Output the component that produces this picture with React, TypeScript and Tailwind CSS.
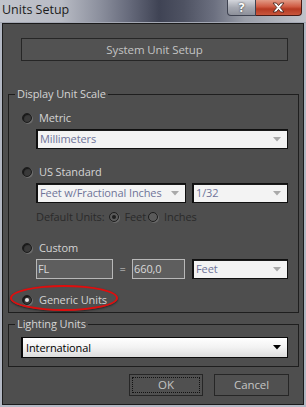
import React from "react";

const FONT = "font-['Open_Sans',sans-serif]";

function Radio({ checked = false, disabled = false }: { checked?: boolean; disabled?: boolean }) {
  return (
    <span
      className={`relative flex items-center justify-center w-[10px] h-[10px] rounded-full shrink-0 border border-[#1c1c1c] ${
        disabled ? "bg-[#5a5a5a] shadow-[1px_1px_0_#6a6a6a]" : "bg-[#3a3a3a] shadow-[inset_1px_1px_1px_#151515,1px_1px_0_#6e6e6e]"
      }`}
    >
      {checked && (
        <span className={`w-[4px] h-[4px] rounded-full ${disabled ? "bg-[#1e1e1e]" : "bg-[#e4e4e4]"}`} />
      )}
    </span>
  );
}

function Arrow({ dark = false }: { dark?: boolean }) {
  return (
    <svg width="8" height="5" viewBox="0 0 8 5" className="shrink-0">
      <path d="M0 0H8L4 4.5Z" fill={dark ? "#000000" : "#a9a9a9"} />
    </svg>
  );
}

function Drop({ cls, text }: { cls: string; text: string }) {
  return (
    <div
      className={`flex items-center h-[20px] pl-[2px] pr-[6px] bg-[#f3f3f3] border border-[#101010] border-l-2 shadow-[inset_0_1px_0_#1a1a1a] ${cls}`}
    >
      <span className="flex-1 text-[#6f7399] whitespace-nowrap leading-[16px]">{text}</span>
      <Arrow />
    </div>
  );
}

function Field({ cls, text }: { cls: string; text: string }) {
  return (
    <div className={`flex items-center h-[20px] pl-[1px] bg-[#5e5e5e] border border-[#b8b8b8] ${cls}`}>
      <span className="text-[#d8d8d8] leading-[16px]">{text}</span>
    </div>
  );
}

export default function App() {
  return (
    <div className={`w-[306px] h-[407px] bg-[#b3b8c4] flex flex-col ${FONT} text-[11px] tracking-[-0.1px] overflow-hidden`}>
      {/* Title bar */}
      <div className="h-[23px] flex items-start pl-[2px] pr-[4px] bg-[linear-gradient(90deg,#c1c4cc_0%,#b8bbc4_20%,#8a8e9c_33%,#676b7c_42%,#3f4354_52%,#4e5262_60%,#6c7080_70%,#9a9ea8_80%,#c0c3ca_100%)] border-b border-[#a4a8b4]">
        <span className="mt-[2px] text-[12.5px] tracking-normal text-[#1c1c1c] leading-[16px]">Units Setup</span>
        <div className="ml-auto flex h-[16px]">
          <div className="w-[29px] h-[16px] flex items-start justify-center rounded-bl-[4px] border border-t-0 border-[#3e4250] bg-[linear-gradient(180deg,#d4d6dc_0%,#a6a9b2_50%,#8d909a_100%)]">
            <span className="text-[12px] font-bold text-white leading-[15px] [text-shadow:0_0_2px_#222]">?</span>
          </div>
          <div className="w-[46px] h-[16px] flex items-center justify-center rounded-br-[4px] border border-l-0 border-t-0 border-[#4a1a14] bg-[linear-gradient(180deg,#e29a86_0%,#cf5a42_45%,#b63a22_60%,#c9563c_100%)]">
            <svg width="13" height="11" viewBox="0 0 13 11">
              <path
                d="M1 1H4.3L6.5 3.6L8.7 1H12L8.2 5.5L12 10H8.7L6.5 7.4L4.3 10H1L4.8 5.5Z"
                fill="#ffffff"
                stroke="#3a1a14"
                strokeWidth="0.8"
              />
            </svg>
          </div>
        </div>
      </div>

      {/* Client area */}
      <div className="ml-[2px] w-[302px] h-[382px] border border-[#1a1a1a] bg-[#4e4e4e] flex flex-col">
        <button className="mt-[14px] ml-[18px] w-[267px] h-[23px] border border-[#262626] bg-[#525252] text-[#c4c4c4] text-[11.5px] leading-none">
          System Unit Setup
        </button>

        {/* Display Unit Scale group */}
        <div className="relative mt-[33px] ml-[5px] w-[291px] h-[219px] border border-[#1e1e1e] flex flex-col">
          <span className="absolute -top-[9px] left-[6px] px-[2px] bg-[#4e4e4e] text-[#d4d4d4] leading-[16px]">
            Display Unit Scale
          </span>

          <div className="mt-[16px] ml-[13px] h-[14px] flex items-center gap-[7px]">
            <Radio />
            <span className="text-[#d4d4d4] leading-[16px]">Metric</span>
          </div>
          <Drop cls="mt-[4px] ml-[27px] w-[252px]" text="Millimeters" />

          <div className="mt-[16px] ml-[13px] h-[14px] flex items-center gap-[7px]">
            <Radio />
            <span className="text-[#d4d4d4] leading-[16px]">US Standard</span>
          </div>
          <div className="mt-[4px] ml-[27px] flex gap-[6px]">
            <Drop cls="w-[150px]" text="Feet w/Fractional Inches" />
            <Drop cls="w-[96px]" text="1/32" />
          </div>

          <div className="mt-[7px] ml-[27px] h-[14px] flex items-center text-[#2a2a2a] leading-[16px]">
            <span>Default Units:</span>
            <span className="ml-[5px]">
              <Radio checked disabled />
            </span>
            <span className="ml-[5px]">Feet</span>
            <span className="ml-[2px]">
              <Radio disabled />
            </span>
            <span className="ml-[6px]">Inches</span>
          </div>

          <div className="mt-[17px] ml-[13px] h-[14px] flex items-center gap-[7px]">
            <Radio />
            <span className="text-[#d4d4d4] leading-[16px]">Custom</span>
          </div>
          <div className="mt-[4px] ml-[27px] flex items-center">
            <Field cls="w-[77px]" text="FL" />
            <span className="w-[19px] text-center text-[#d0d0d0] leading-[16px]">=</span>
            <Field cls="w-[53px]" text="660,0" />
            <Drop cls="ml-[7px] w-[96px]" text="Feet" />
          </div>

          <div className="mt-[14px] ml-[13px] h-[14px] flex items-center gap-[7px]">
            <Radio checked />
            <span className="text-[#d4d4d4] leading-[16px]">Generic Units</span>
          </div>

          <div className="absolute left-[1px] top-[190px] w-[108px] h-[26px] rounded-[50%] border-2 border-[#e00d0d] shadow-[0_1px_2px_rgba(0,0,0,0.5)]" />
        </div>

        {/* Lighting Units group */}
        <div className="relative mt-[11px] ml-[5px] w-[291px] h-[43px] border border-[#1e1e1e] flex flex-col">
          <span className="absolute -top-[9px] left-[6px] px-[2px] bg-[#4e4e4e] text-[#d4d4d4] leading-[16px]">
            Lighting Units
          </span>
          <div className="mt-[12px] ml-[12px] w-[267px] h-[21px] flex items-center pl-[3px] pr-[6px] border border-[#0a0a0a] border-l-2 bg-[linear-gradient(180deg,#ffffff_0%,#f2f2f2_50%,#dcdcdc_100%)]">
            <span className="flex-1 text-black leading-[16px]">International</span>
            <Arrow dark />
          </div>
        </div>

        {/* Buttons */}
        <div className="mt-[7px] ml-[126px] flex gap-[11px]">
          <button className="w-[74px] h-[22px] p-[2px] border border-[#262626] bg-[#505050] text-[#c4c4c4] text-[11.5px] leading-none">
            <span className="flex items-center justify-center w-full h-full border border-dotted border-[#111]">OK</span>
          </button>
          <button className="w-[75px] h-[22px] border border-[#262626] bg-[#505050] text-[#c4c4c4] text-[11.5px] leading-none">
            Cancel
          </button>
        </div>
      </div>
    </div>
  );
}
